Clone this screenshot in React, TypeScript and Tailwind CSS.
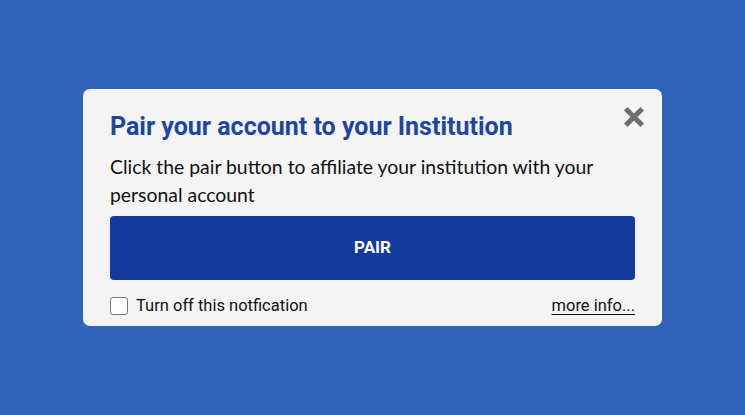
export default function App() {
    return (
        <div className="w-[745px] h-[415px] bg-[#3363b8] flex items-center justify-center">
            <div className="relative w-[579px] bg-[#f4f4f4] rounded-[7px] px-[27px] pt-[23px] pb-[10px]">
                <button className="absolute top-[18px] right-[18px]">
                    <svg width="20" height="20" viewBox="0 0 20 20">
                        <path d="M3.5 3.5 L16.5 16.5 M16.5 3.5 L3.5 16.5" stroke="#6e6e6e" strokeWidth="5" strokeLinecap="square" />
                    </svg>
                </button>
                <h2 className="font-['Roboto',sans-serif] font-bold text-[25px] leading-[30px] text-[#1d45a3]">
                    Pair your account to your Institution
                </h2>
                <p className="mt-[11px] font-['Lato',sans-serif] text-[19.4px] leading-[28px] text-[#111]">
                    Click the pair button to affiliate your institution with your personal account
                </p>
                <button className="mt-[7px] w-full h-[64px] rounded-[4px] bg-[#153a9d] text-white font-['Roboto',sans-serif] font-bold text-[17px]">
                    PAIR
                </button>
                <div className="mt-[16px] flex items-center justify-between font-['Roboto',sans-serif] text-[16.5px] leading-[20px] text-[#111]">
                    <label className="flex items-center gap-[8px]">
                        <span className="w-[18px] h-[18px] rounded-[3px] border-[1.5px] border-[#767676] bg-white" />
                        Turn off this notfication
                    </label>
                    <a className="underline underline-offset-[3px]">more info...</a>
                </div>
            </div>
        </div>
    );
}
